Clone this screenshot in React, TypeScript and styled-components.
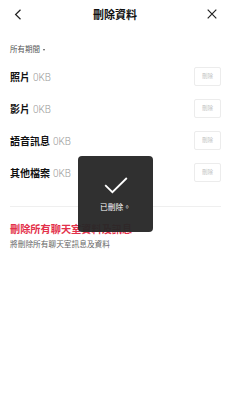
import React from "react";
import styled, { createGlobalStyle } from "styled-components";

const GlobalStyle = createGlobalStyle`
  html, body {
    margin: 0;
    padding: 0;
    background: #ffffff;
  }
  body {
    font-family: "Noto Sans CJK TC", "Noto Sans", sans-serif;
    color: #111111;
  }
`;

const ITEMS = ["照片", "影片", "語音訊息", "其他檔案"];

const App: React.FC = () => {
  return (
    <>
      <GlobalStyle />
      <Page>
        <Header>
          <IconButton aria-label="back">
            <svg width="8" height="11" viewBox="0 0 8 11">
              <path d="M6.5 0.8 L1.6 5.5 L6.5 10.2" fill="none" stroke="#222" strokeWidth="1.2" />
            </svg>
          </IconButton>
          <Title>刪除資料</Title>
          <IconButton aria-label="close">
            <svg width="10" height="10" viewBox="0 0 10 10">
              <path d="M0.7 0.7 L9.3 9.3 M9.3 0.7 L0.7 9.3" fill="none" stroke="#222" strokeWidth="1.2" />
            </svg>
          </IconButton>
        </Header>

        <Filter>
          所有期間
          <Caret />
        </Filter>

        <List>
          {ITEMS.map((item) => (
            <Row key={item}>
              <Label>
                {item}
                <Size>0KB</Size>
              </Label>
              <DeleteButton>刪除</DeleteButton>
            </Row>
          ))}
        </List>

        <Divider />

        <Danger>
          <DangerTitle>刪除所有聊天室資料及訊息</DangerTitle>
          <DangerText>將刪除所有聊天室訊息及資料</DangerText>
        </Danger>

        <Toast>
          <svg width="24" height="17" viewBox="0 0 24 17">
            <path d="M1.2 8.2 L8.4 15.2 L22.8 1" fill="none" stroke="#ffffff" strokeWidth="1.8" />
          </svg>
          <ToastText>已刪除。</ToastText>
        </Toast>
      </Page>
    </>
  );
};

export default App;

const Page = styled.div`
  position: relative;
  width: 231px;
  height: 400px;
  background: #ffffff;
`;

const Header = styled.div`
  display: grid;
  grid-template-columns: 20px 1fr 20px;
  align-items: center;
  height: 28px;
  padding: 0 9px 0 8px;
`;

const IconButton = styled.div`
  display: flex;
  align-items: center;
  justify-content: center;
  height: 28px;
`;

const Title = styled.div`
  text-align: center;
  font-size: 11px;
  font-weight: 700;
  color: #111111;
  line-height: 28px;
`;

const Filter = styled.div`
  display: flex;
  align-items: center;
  gap: 3px;
  padding: 15px 10px 0;
  height: 12px;
  line-height: 12px;
  font-size: 7.5px;
  color: #555555;
  margin-bottom: 5px;
`;

const Caret = styled.span`
  width: 0;
  height: 0;
  border-left: 1.5px solid transparent;
  border-right: 1.5px solid transparent;
  border-top: 2px solid #555555;
  margin-top: 1px;
`;

const List = styled.div`
  display: flex;
  flex-direction: column;
`;

const Row = styled.div`
  display: flex;
  align-items: center;
  justify-content: space-between;
  height: 32px;
  padding: 0 10px;
`;

const Label = styled.div`
  display: flex;
  align-items: baseline;
  gap: 3px;
  font-size: 10px;
  font-weight: 700;
  color: #111111;
`;

const Size = styled.span`
  font-family: "Roboto", "Noto Sans", sans-serif;
  font-size: 10px;
  font-weight: 300;
  color: #9a9a9a;
`;

const DeleteButton = styled.div`
  box-sizing: border-box;
  width: 27px;
  height: 19px;
  border: 1px solid #ececec;
  border-radius: 2px;
  display: flex;
  align-items: center;
  justify-content: center;
  font-size: 5.5px;
  color: #c4c4c4;
`;

const Divider = styled.div`
  margin: 18px 10px 0;
  height: 1px;
  background: #efefef;
`;

const Danger = styled.div`
  display: flex;
  flex-direction: column;
  gap: 3px;
  padding: 15px 10px 0;
`;

const DangerTitle = styled.div`
  font-size: 10.2px;
  line-height: 14px;
  font-weight: 700;
  color: #e3314b;
`;

const DangerText = styled.div`
  font-size: 7.7px;
  line-height: 10px;
  color: #666666;
`;

const Toast = styled.div`
  position: absolute;
  left: 78px;
  top: 156px;
  width: 75px;
  height: 76px;
  box-sizing: border-box;
  padding-top: 21px;
  border-radius: 4px;
  background: rgba(40, 40, 40, 0.96);
  display: flex;
  flex-direction: column;
  align-items: center;
  gap: 8px;
`;

const ToastText = styled.div`
  font-size: 7.7px;
  line-height: 10px;
  color: #ffffff;
`;
